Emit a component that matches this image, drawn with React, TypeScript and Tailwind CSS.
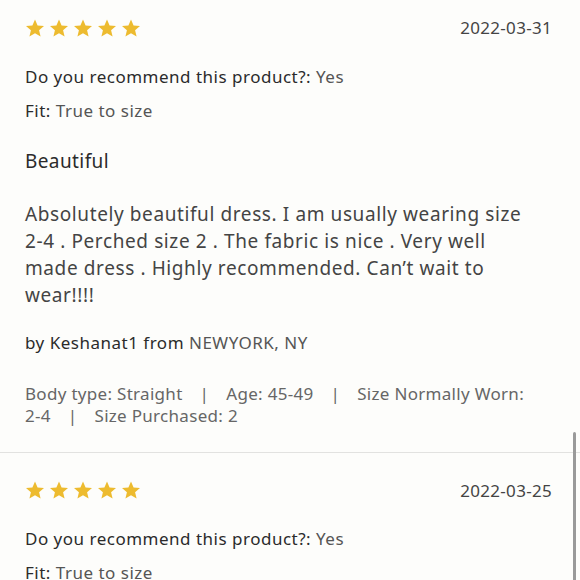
const reviews = [
  {
    date: '2022-03-31',
    recommend: 'Yes',
    fit: 'True to size',
    title: 'Beautiful',
    body: 'Absolutely beautiful dress. I am usually wearing size 2-4 . Perched size 2 . The fabric is nice . Very well made dress . Highly recommended. Can\u2019t wait to wear!!!!',
    author: 'Keshanat1',
    location: 'NEWYORK, NY',
    meta: [
      ['Body type:', 'Straight'],
      ['Age:', '45-49'],
      ['Size Normally Worn:', '2-4'],
      ['Size Purchased:', '2'],
    ],
  },
  {
    date: '2022-03-25',
    recommend: 'Yes',
    fit: 'True to size',
    title: 'Lovely',
    body: 'Fits perfectly.',
    author: 'Guest',
    location: 'NY',
    meta: [['Body type:', 'Straight']],
  },
];

// keep ranges like "2-4" on one line
function NoHyphenBreak({ text }: { text: string }) {
  return (
    <>
      {text.split(' ').map((w, i) => (
        <span key={i}>
          {i > 0 && ' '}
          {w.includes('-') ? <span className="whitespace-nowrap">{w}</span> : w}
        </span>
      ))}
    </>
  );
}

function Star() {
  return (
    <svg width="20" height="20" viewBox="0 0 24 24" className="shrink-0">
      <path
        d="M12 1.8l3.1 7.2 7.7.6-5.9 5.1 1.8 7.6L12 18.2l-6.7 4.1 1.8-7.6-5.9-5.1 7.7-.6z"
        fill="#edbb2f"
      />
    </svg>
  );
}

function Review({ r }: { r: (typeof reviews)[number] }) {
  return (
    <div className="px-[25px] pt-[25px] pb-[25px] border-b border-[#e2e2e0]">
      <div className="flex items-center justify-between pr-[3px]">
        <div className="flex gap-[4px]">
          {[0, 1, 2, 3, 4].map((i) => (
            <Star key={i} />
          ))}
        </div>
        <span className="text-[17px] text-[#444] tracking-[0.3px]">{r.date}</span>
      </div>

      <p className="mt-[24px] text-[17px] leading-[24px] tracking-[0.5px] text-[#2b2b2b]">
        Do you recommend this product?: <span className="text-[#555]">{r.recommend}</span>
      </p>
      <p className="mt-[10px] text-[17px] leading-[24px] tracking-[0.5px] text-[#2b2b2b]">
        Fit: <span className="text-[#555]">{r.fit}</span>
      </p>

      <h3 className="mt-[26px] text-[19px] leading-[24px] tracking-[0.4px] text-[#2b2b2b]">{r.title}</h3>

      <p className="mt-[28px] mr-[25px] text-[19px] leading-[27px] tracking-[0.6px] text-[#444]">
        <NoHyphenBreak text={r.body} />
      </p>

      <p className="mt-[22px] text-[17px] leading-[24px] tracking-[0.5px] text-[#2b2b2b]">
        by {r.author} from <span className="text-[#555]">{r.location}</span>
      </p>

      <p className="mt-[28px] text-[17px] leading-[22px] tracking-[0.3px] text-[#666]">
        {r.meta.map(([label, value], i) => (
          <span key={label}>
            {i > 0 && <span className="px-[17px]">|</span>}
            {label} <span className="whitespace-nowrap">{value}</span>
          </span>
        ))}
      </p>
    </div>
  );
}

export default function App() {
  return (
    <div
      className="relative h-[580px] overflow-hidden bg-[#fdfdfb]"
      style={{ fontFamily: '"Noto Sans", Lato, sans-serif' }}
    >
      {/* list is scrolled a little */}
      <div className="-mt-[10px]">
        {reviews.map((r) => (
          <Review key={r.date} r={r} />
        ))}
      </div>
      {/* scrollbar thumb */}
      <div className="absolute right-[4px] top-[432px] h-[160px] w-[3px] rounded-full bg-[#9a9a9a]" />
    </div>
  );
}
